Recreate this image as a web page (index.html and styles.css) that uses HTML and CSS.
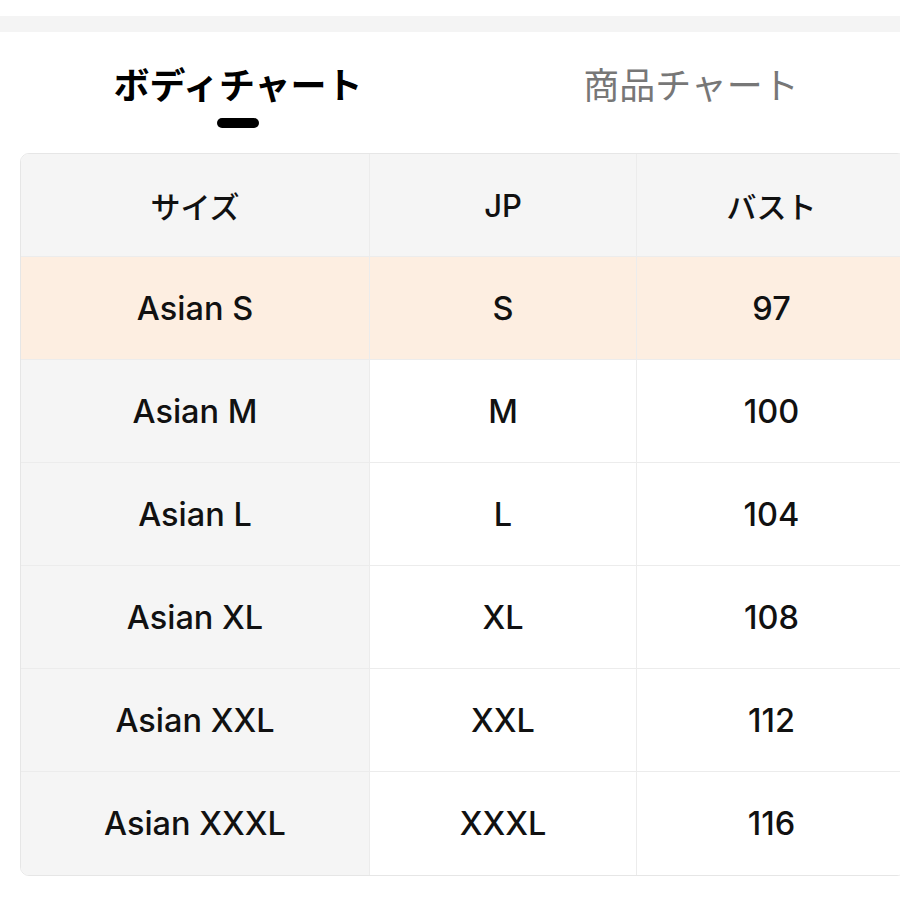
FILE: index.html
```html
<!DOCTYPE html>
<html lang="ja">
<head>
<meta charset="utf-8">
<link rel="stylesheet" href="styles.css">
</head>
<body>
<div class="topband"></div>
<div class="tabs">
  <div class="tab active"><span class="label">ボディチャート</span><span class="bar"></span></div>
  <div class="tab"><span class="label">商品チャート</span></div>
</div>
<div class="table">
  <div class="cell head first">サイズ</div>
  <div class="cell head latin">JP</div>
  <div class="cell head">バスト</div>

  <div class="cell hl first">Asian S</div>
  <div class="cell hl">S</div>
  <div class="cell hl">97</div>

  <div class="cell side">Asian M</div>
  <div class="cell">M</div>
  <div class="cell">100</div>

  <div class="cell side">Asian L</div>
  <div class="cell">L</div>
  <div class="cell">104</div>

  <div class="cell side">Asian XL</div>
  <div class="cell">XL</div>
  <div class="cell">108</div>

  <div class="cell side">Asian XXL</div>
  <div class="cell">XXL</div>
  <div class="cell">112</div>

  <div class="cell side last">Asian XXXL</div>
  <div class="cell last">XXXL</div>
  <div class="cell last">116</div>
</div>
</body>
</html>
```
FILE: styles.css
```css
html, body {
  margin: 0;
  padding: 0;
  background: #ffffff;
  width: 900px;
  height: 900px;
  overflow: hidden;
  font-family: "Inter", "Noto Sans CJK JP", sans-serif;
  color: #111;
}

.topband {
  margin-top: 16px;
  height: 16px;
  background: #f4f4f4;
}

.tabs {
  display: grid;
  grid-template-columns: 476px 430px;
  height: 121px;
}

.tab {
  display: flex;
  flex-direction: column;
  align-items: center;
  padding-top: 29px;
}

.tab .label {
  font-family: "Noto Sans CJK JP", sans-serif;
  font-size: 36px;
  line-height: 44px;
  color: #777777;
  font-weight: 400;
}

.tab.active .label {
  color: #000;
  font-weight: 700;
}

.tab .bar {
  margin-top: 13px;
  width: 42px;
  height: 10px;
  border-radius: 5px;
  background: #000;
}

.table {
  margin-left: 20px;
  width: 886px;
  display: grid;
  grid-template-columns: 349px 267px 270px;
  grid-auto-rows: 103px;
  border: 1.5px solid #e6e6e6;
  border-radius: 9px;
  overflow: hidden;
  box-sizing: border-box;
}

.cell {
  display: flex;
  align-items: center;
  justify-content: center;
  font-size: 32.5px;
  font-weight: 500;
  border-right: 1px solid #ececec;
  border-bottom: 1px solid #ececec;
  background: #fff;
  color: #111;
}

.cell.head {
  background: #f5f5f5;
  font-family: "Noto Sans CJK JP", sans-serif;
  font-size: 30px;
  font-weight: 500;
}

.cell.head.latin {
  font-family: "Inter", sans-serif;
  font-size: 31px;
  font-weight: 500;
}

.cell.hl {
  background: #fdeee1;
}

.cell.side {
  background: #f5f5f5;
}

.cell.last {
  border-bottom: none;
}
```
